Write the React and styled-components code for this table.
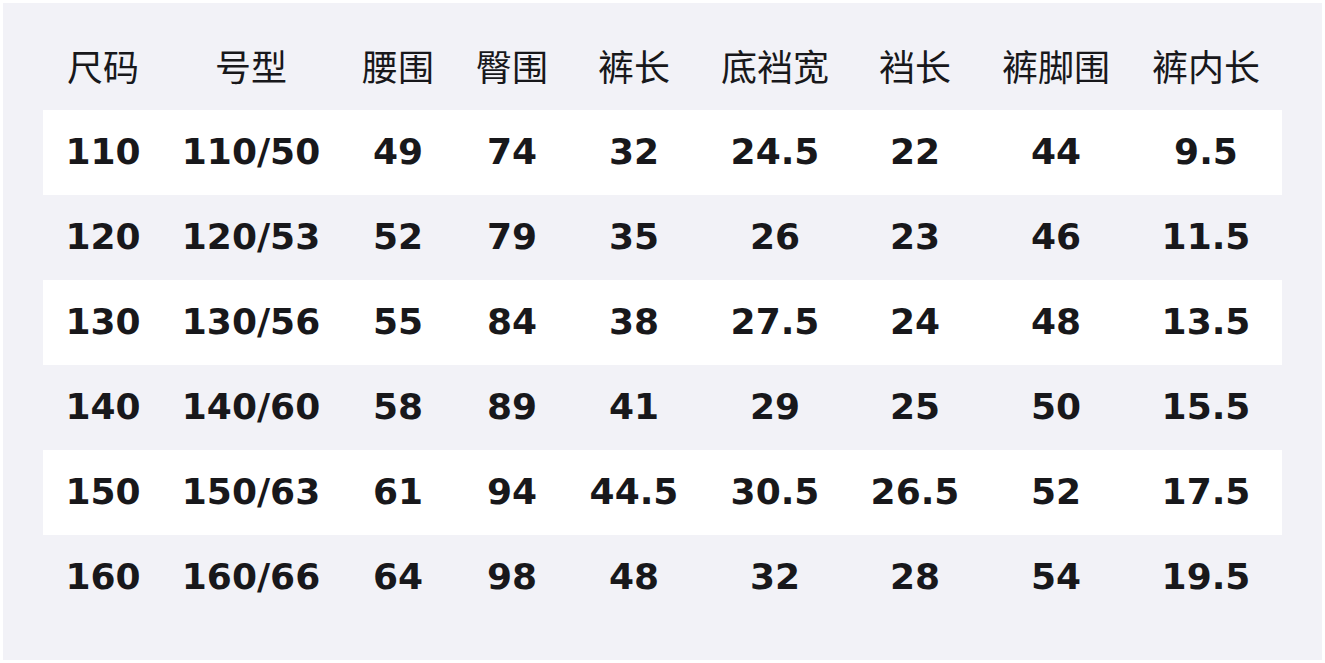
import React from 'react';
import styled, { createGlobalStyle } from 'styled-components';

const GlobalStyle = createGlobalStyle`
  html, body {
    margin: 0;
    padding: 0;
    background: #ffffff;
  }
  body {
    font-family: "DejaVu Sans", "Noto Sans CJK SC", sans-serif;
  }
`;

const Frame = styled.div`
  padding: 3px;
  width: 1325px;
  height: 663px;
  box-sizing: border-box;
`;

const Panel = styled.div`
  background: #f2f2f7;
  padding: 23px 40px 39px;
  height: 100%;
  box-sizing: border-box;
`;

const COLS = '120px 176px 118px 110px 134px 148px 132px 150px 150px';

const Row = styled.div`
  display: grid;
  grid-template-columns: ${COLS};
  align-items: center;
  box-sizing: border-box;
  height: ${(p) => (p.$header ? 84 : 85)}px;
  padding-bottom: ${(p) => (p.$header ? 6 : 2)}px;
  background: ${(p) => (p.$striped ? '#ffffff' : 'transparent')};
`;

const Cell = styled.div`
  text-align: center;
  font-size: 36px;
  color: #18181b;
  white-space: nowrap;
  font-weight: ${(p) => (p.$header ? 400 : 700)};
  font-family: ${(p) =>
    p.$header
      ? '"Noto Sans CJK SC", "DejaVu Sans", sans-serif'
      : '"DejaVu Sans", "Noto Sans CJK SC", sans-serif'};
`;

const headers = ['尺码', '号型', '腰围', '臀围', '裤长', '底裆宽', '裆长', '裤脚围', '裤内长'];

const rows = [
  ['110', '110/50', '49', '74', '32', '24.5', '22', '44', '9.5'],
  ['120', '120/53', '52', '79', '35', '26', '23', '46', '11.5'],
  ['130', '130/56', '55', '84', '38', '27.5', '24', '48', '13.5'],
  ['140', '140/60', '58', '89', '41', '29', '25', '50', '15.5'],
  ['150', '150/63', '61', '94', '44.5', '30.5', '26.5', '52', '17.5'],
  ['160', '160/66', '64', '98', '48', '32', '28', '54', '19.5'],
];

export default function App() {
  return (
    <>
      <GlobalStyle />
      <Frame>
        <Panel>
          <Row $header>
            {headers.map((h) => (
              <Cell key={h} $header>
                {h}
              </Cell>
            ))}
          </Row>
          {rows.map((r, i) => (
            <Row key={r[0]} $striped={i % 2 === 0}>
              {r.map((v, j) => (
                <Cell key={j}>{v}</Cell>
              ))}
            </Row>
          ))}
        </Panel>
      </Frame>
    </>
  );
}
